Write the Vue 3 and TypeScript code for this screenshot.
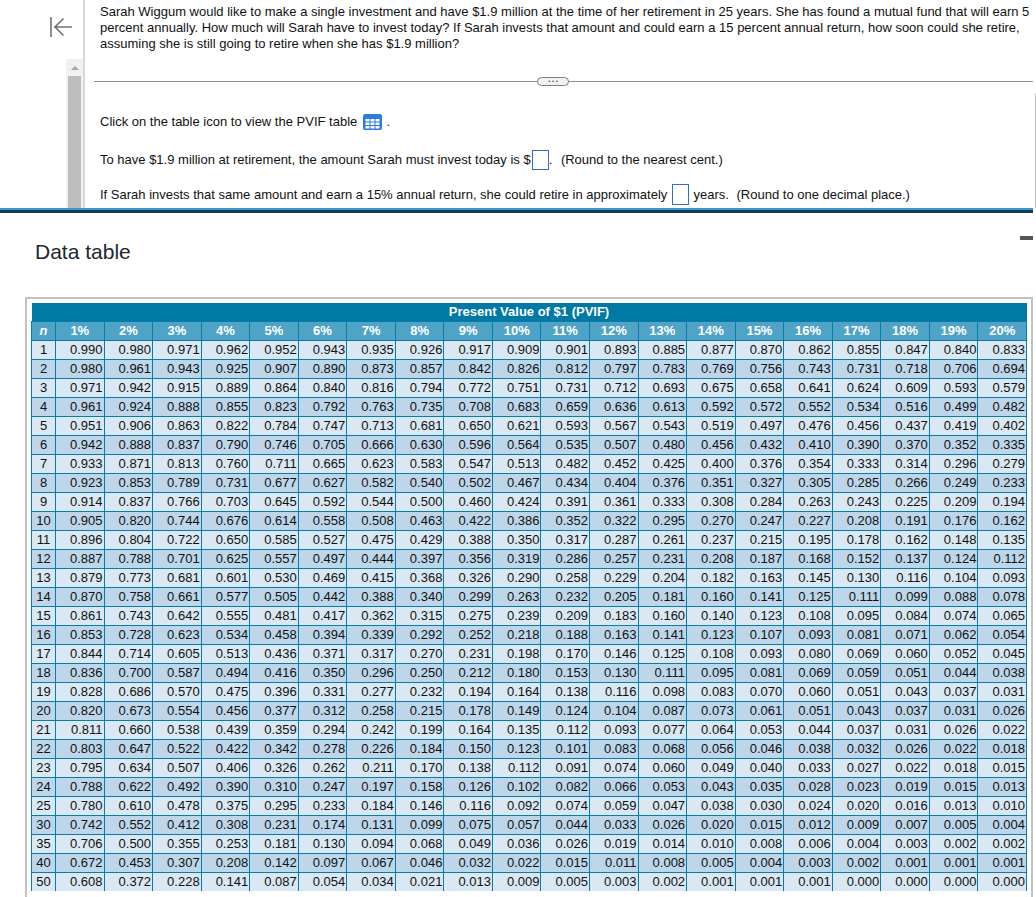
<script setup lang="ts">
// PVIF values as printed, one row per period
const periods = [1, 2, 3, 4, 5, 6, 7, 8, 9, 10, 11, 12, 13, 14, 15, 16, 17, 18, 19, 20, 21, 22, 23, 24, 25, 30, 35, 40, 50]
const rates = Array.from({ length: 20 }, (_, i) => `${i + 1}%`)

const raw = `990 980 971 962 952 943 935 926 917 909 901 893 885 877 870 862 855 847 840 833
980 961 943 925 907 890 873 857 842 826 812 797 783 769 756 743 731 718 706 694
971 942 915 889 864 840 816 794 772 751 731 712 693 675 658 641 624 609 593 579
961 924 888 855 823 792 763 735 708 683 659 636 613 592 572 552 534 516 499 482
951 906 863 822 784 747 713 681 650 621 593 567 543 519 497 476 456 437 419 402
942 888 837 790 746 705 666 630 596 564 535 507 480 456 432 410 390 370 352 335
933 871 813 760 711 665 623 583 547 513 482 452 425 400 376 354 333 314 296 279
923 853 789 731 677 627 582 540 502 467 434 404 376 351 327 305 285 266 249 233
914 837 766 703 645 592 544 500 460 424 391 361 333 308 284 263 243 225 209 194
905 820 744 676 614 558 508 463 422 386 352 322 295 270 247 227 208 191 176 162
896 804 722 650 585 527 475 429 388 350 317 287 261 237 215 195 178 162 148 135
887 788 701 625 557 497 444 397 356 319 286 257 231 208 187 168 152 137 124 112
879 773 681 601 530 469 415 368 326 290 258 229 204 182 163 145 130 116 104 093
870 758 661 577 505 442 388 340 299 263 232 205 181 160 141 125 111 099 088 078
861 743 642 555 481 417 362 315 275 239 209 183 160 140 123 108 095 084 074 065
853 728 623 534 458 394 339 292 252 218 188 163 141 123 107 093 081 071 062 054
844 714 605 513 436 371 317 270 231 198 170 146 125 108 093 080 069 060 052 045
836 700 587 494 416 350 296 250 212 180 153 130 111 095 081 069 059 051 044 038
828 686 570 475 396 331 277 232 194 164 138 116 098 083 070 060 051 043 037 031
820 673 554 456 377 312 258 215 178 149 124 104 087 073 061 051 043 037 031 026
811 660 538 439 359 294 242 199 164 135 112 093 077 064 053 044 037 031 026 022
803 647 522 422 342 278 226 184 150 123 101 083 068 056 046 038 032 026 022 018
795 634 507 406 326 262 211 170 138 112 091 074 060 049 040 033 027 022 018 015
788 622 492 390 310 247 197 158 126 102 082 066 053 043 035 028 023 019 015 013
780 610 478 375 295 233 184 146 116 092 074 059 047 038 030 024 020 016 013 010
742 552 412 308 231 174 131 099 075 057 044 033 026 020 015 012 009 007 005 004
706 500 355 253 181 130 094 068 049 036 026 019 014 010 008 006 004 003 002 002
672 453 307 208 142 097 067 046 032 022 015 011 008 005 004 003 002 001 001 001
608 372 228 141 087 054 034 021 013 009 005 003 002 001 001 001 000 000 000 000`

const rows = raw.split('\n').map((line, index) => ({
  n: periods[index],
  values: line.split(' ').map((v) => `0.${v}`),
}))
</script>

<template>
  <main class="page">
    <section class="question">
      <aside class="rail">
        <svg class="collapse" width="22" height="20" viewBox="0 0 22 20" fill="none" stroke="#6f7275" stroke-width="1.6">
          <path d="M1 0v20M22 10H4M13.5 1.5 5 10l8.5 8.5" />
        </svg>
        <div class="scrollbar">
          <span class="arrow"></span>
          <span class="thumb"></span>
        </div>
      </aside>

      <div class="body">
        <p class="intro">
          Sarah Wiggum would like to make a single investment and have $1.9 million at the time of her retirement in 25 years. She has found a mutual fund that will earn 5<br />
          percent annually. How much will Sarah have to invest today? If Sarah invests that amount and could earn a 15 percent annual return, how soon could she retire,<br />
          assuming she is still going to retire when she has $1.9 million?
        </p>
        <div class="divider"><span class="pill">• • •</span></div>
        <p class="click">
          Click on the table icon to view the PVIF table
          <svg class="grid-icon" width="19" height="16" viewBox="0 0 19 16">
            <rect width="19" height="16" rx="2" fill="#2a7de1" />
            <g fill="#fff">
              <rect v-for="cell in 9" :key="cell" :x="2.5 + ((cell - 1) % 3) * 5" :y="5 + Math.floor((cell - 1) / 3) * 3.5" width="4" height="2.5" />
            </g>
          </svg>
          .
        </p>
        <p class="amount">
          To have $1.9 million at retirement, the amount Sarah must invest today is $<span class="blank small"></span>. <span class="hint short">(Round to the nearest cent.)</span>
        </p>
        <p class="retire">
          If Sarah invests that same amount and earn a 15% annual return, she could retire in approximately <span class="blank wide"></span> years. <span class="hint">(Round to one decimal place.)</span>
        </p>
      </div>
      <span class="page-scroll"></span>
    </section>

    <div class="split"></div>

    <header class="dialog-head">
      <h1>Data table</h1>
      <span class="close-dash"></span>
    </header>

    <section class="frame">
      <table>
        <colgroup>
          <col class="col-n" />
          <col v-for="rate in rates" :key="rate" />
        </colgroup>
        <thead>
          <tr class="title-row">
            <th :colspan="21">Present Value of $1 (PVIF)</th>
          </tr>
          <tr class="rate-row">
            <th class="n-head">n</th>
            <th v-for="rate in rates" :key="rate">{{ rate }}</th>
          </tr>
        </thead>
        <tbody>
          <tr v-for="row in rows" :key="row.n">
            <td class="n-cell">{{ row.n }}</td>
            <td v-for="(value, i) in row.values" :key="i">{{ value }}</td>
          </tr>
        </tbody>
      </table>
    </section>
  </main>
</template>

<style>
html,
body {
  margin: 0;
  background: #fff;
}
</style>

<style scoped>
.page {
  width: 1036px;
  height: 897px;
  overflow: hidden;
  background: #fff;
  color: #111;
  font-family: 'Liberation Sans', Arial, sans-serif;
  font-size: 13px;
}

.question {
  position: relative;
  display: flex;
  height: 208px;
  width: 1036px;
  overflow: hidden;
}

.rail {
  box-sizing: border-box;
  flex: 0 0 85px;
  height: 208px;
  border-right: 2px solid #d8d8d8;
  display: flex;
  flex-direction: column;
  align-items: flex-end;
}

.collapse {
  margin: 17px 11px 0 0;
  flex: none;
}

.scrollbar {
  margin-top: 22px;
  width: 17px;
  flex: 1;
  background: #f1f1f1;
  display: flex;
  flex-direction: column;
  align-items: center;
}

.arrow {
  margin-top: 7px;
  border: 4px solid transparent;
  border-top: 0;
  border-bottom: 4px solid #a6a6a6;
}

.thumb {
  margin-top: 6px;
  width: 13px;
  flex: 1;
  background: #bdbdbd;
}

.body {
  flex: 1;
  min-width: 0;
  padding-left: 9px;
}

.body p {
  margin: 0;
  padding-left: 6px;
  white-space: nowrap;
  line-height: 16px;
}

.intro {
  margin-top: 4px !important;
}

.divider {
  position: relative;
  margin: 29px 3px 0 0;
  height: 1px;
  background: #8d8f99;
}

.pill {
  position: absolute;
  left: 443px;
  top: -4px;
  box-sizing: border-box;
  width: 32px;
  height: 9px;
  border: 1px solid #7d7f88;
  border-radius: 5px;
  background: #f2f2f2;
  font-size: 6px;
  line-height: 6px;
  text-align: center;
  color: #555;
}

.click,
.amount,
.retire {
  height: 16px;
}

.click {
  margin-top: 32px !important;
}

.grid-icon {
  vertical-align: -4px;
  margin: 0 1px 0 2px;
}

.amount {
  margin-top: 20px !important;
}

.retire {
  margin-top: 18px !important;
}

.blank {
  display: inline-block;
  box-sizing: border-box;
  width: 17px;
  height: 21px;
  border: 1px solid #2f6fd0;
  vertical-align: -6px;
}

.blank.small {
  height: 20px;
  margin-left: 1px;
}

.blank.wide {
  margin: 0 1px;
}

.hint {
  margin-left: 4px;
}

.hint.short {
  margin-left: 5px;
}

.page-scroll {
  position: absolute;
  right: 0;
  top: 93px;
  bottom: 0;
  width: 1px;
  background: #c4c4c4;
}

.split {
  width: 1033px;
  height: 5px;
  box-sizing: border-box;
  border-top: 2px solid #2d9bd6;
  background: #1d3a4d;
}

.dialog-head {
  position: relative;
  height: 84px;
}

.dialog-head h1 {
  margin: 0;
  padding: 27px 0 0 35px;
  font-size: 21px;
  font-weight: 400;
  line-height: 24px;
  color: #1c2733;
}

.close-dash {
  position: absolute;
  left: 1020px;
  top: 23px;
  width: 13px;
  height: 4px;
  background: #555;
}

.frame {
  box-sizing: border-box;
  margin-left: 25px;
  width: 1008px;
  height: 600px;
  border: solid #c2c2c2;
  border-width: 2px 2px 0;
  padding: 4px 0 0 4px;
}

table {
  table-layout: fixed;
  width: 996px;
  border-collapse: collapse;
  font-size: 13px;
}

.col-n {
  width: 24px;
}

th,
td {
  padding: 0;
  height: 18px;
  line-height: 18px;
  border: 1px solid #0a7ca8;
  overflow: hidden;
}

.title-row th {
  background: #0079a5;
  color: #fff;
  font-size: 13px;
  font-weight: 700;
  border: 0;
  height: 18px;
}

.rate-row th {
  background: #4fa3c7;
  color: #fff;
  font-weight: 700;
}

.n-head {
  font-style: italic;
}

td {
  text-align: right;
  padding-right: 1px;
  color: #111;
}

td.n-cell {
  text-align: center;
  padding-right: 0;
}

tbody tr:nth-child(odd) td {
  background: #d9e8f2;
}

tbody tr:nth-child(even) td {
  background: #bdd6ea;
}

tbody tr:last-child td {
  border-bottom: 0;
}
</style>
